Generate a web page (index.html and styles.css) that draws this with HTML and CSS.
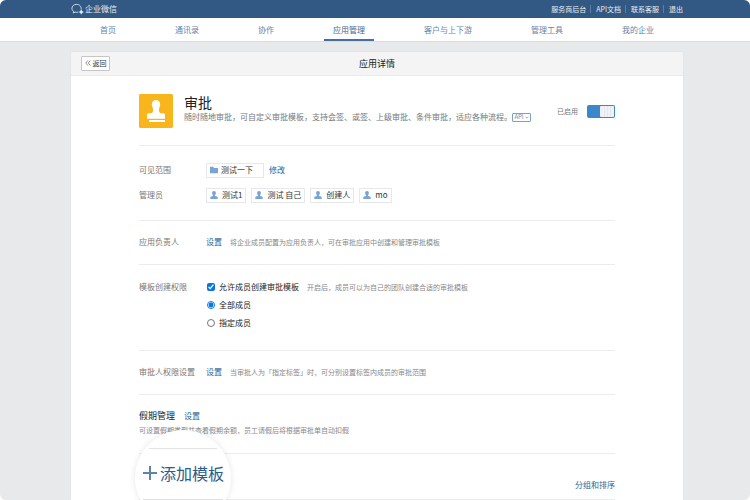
FILE: index.html
```html
<!DOCTYPE html>
<html lang="zh-CN">
<head>
<meta charset="utf-8">
<title>应用详情 - 企业微信</title>
<link rel="stylesheet" href="styles.css">
</head>
<body>
<svg class="sprite" width="0" height="0" aria-hidden="true">
  <symbol id="person" viewBox="0 0 8 8"><path d="M4 0c1.300 0 1.900.9 1.900 2 0 .9-.4 1.600-.8 2v1l2 .6c.4.200.6.500.6.900V8H.3V6.500c0-.4.2-.7.6-.9l2-.6V4c-.4-.4-.8-1.100-.8-2C2.100.900 2.700 0 4 0z"/></symbol>
</svg>
<div class="page">
  <header class="topbar">
    <a class="brand" href="#">
      <svg class="brand-logo" viewBox="0 0 14 12" aria-hidden="true">
        <path d="M10.800 6.300C11.400 3.400 9.200 1 5.900 1 3.200 1 1 2.900 1 5.300c0 1.400.7 2.500 1.800 3.300l-.3 1.700 1.900-1c1.200.4 2.400.4 3.500 0"/>
        <path class="dots" d="M11 6.300l1.100 1.800 1.700 1.100-1.700 1-1.100 1.700-1-1.700-1.700-1 1.700-1.100z"/>
      </svg>
      <span>企业微信</span>
    </a>
    <div class="toplinks">
      <a href="#">服务商后台</a><a href="#">API文档</a><a href="#">联系客服</a><a href="#">退出</a>
    </div>
  </header>
  <nav class="nav">
    <a href="#">首页</a>
    <a href="#">通讯录</a>
    <a href="#">协作</a>
    <a class="active" href="#">应用管理</a>
    <a href="#">客户与上下游</a>
    <a href="#">管理工具</a>
    <a href="#">我的企业</a>
  </nav>
  <main class="card">
    <div class="card-head">
      <button class="back" type="button"><svg viewBox="0 0 6 6" aria-hidden="true"><path d="M2.800.5L.8 3l2 2.500M5.300.5l-2 2.500 2 2.500"/></svg>返回</button>
      <h1>应用详情</h1>
    </div>
    <div class="content">
      <section class="app">
        <svg class="app-icon" viewBox="0 0 34 34" aria-hidden="true">
          <rect width="34" height="34" rx="1.500" fill="#f8b51c"/>
          <path fill="#fff" d="M17 6c2.500 0 4.200 1.800 4.200 4.100 0 1.700-.6 2.700-1 4-.4 1.600-.4 3.500.4 4.500.3.500.8.600 1.400.6h2.500c.9 0 1.500.6 1.500 1.500V24.700H8v-4c0-.9.600-1.500 1.500-1.500H12c.6 0 1.100-.1 1.400-.6.8-1 .8-2.900.4-4.500-.4-1.300-1-2.300-1-4C12.800 7.800 14.500 6 17 6zM10 26h16v2H10z"/>
        </svg>
        <div class="app-text">
          <h2>审批</h2>
          <p>随时随地审批，可自定义审批模板，支持会签、或签、上级审批、条件审批，适应各种流程。<button class="api" type="button">API<svg viewBox="0 0 4 3" aria-hidden="true"><path d="M.5.700L2 2.200 3.500.7"/></svg></button></p>
        </div>
        <label class="status">已启用<input class="switch" type="checkbox" role="switch" checked></label>
      </section>
      <section class="scope">
        <div class="row">
          <span class="label">可见范围</span>
          <span class="tag folder"><svg viewBox="0 0 8 8" aria-hidden="true"><path d="M0 .8h3.200l.8 1.100h4v5.300H0z"/></svg>测试一下</span>
          <a class="edit" href="#">修改</a>
        </div>
        <div class="row">
          <span class="label">管理员</span>
          <div class="tags">
            <span class="tag"><svg><use href="#person"/></svg>测试1</span>
            <span class="tag"><svg><use href="#person"/></svg>测试 自己</span>
            <span class="tag"><svg><use href="#person"/></svg>创建人</span>
            <span class="tag"><svg><use href="#person"/></svg>mo</span>
          </div>
        </div>
      </section>
      <section class="single">
        <div class="row">
          <span class="label">应用负责人</span>
          <a href="#">设置</a>
          <span class="hint">将企业成员配置为应用负责人，可在审批应用中创建和管理审批模板</span>
        </div>
      </section>
      <section class="permission">
        <div class="row top">
          <span class="label">模板创建权限</span>
          <div class="options">
            <div class="row">
              <label class="option"><input type="checkbox" checked>允许成员创建审批模板</label>
              <span class="hint">开启后，成员可以为自己的团队创建合适的审批模板</span>
            </div>
            <label class="option"><input type="radio" name="members" checked>全部成员</label>
            <label class="option"><input type="radio" name="members">指定成员</label>
          </div>
        </div>
      </section>
      <section class="single">
        <div class="row">
          <span class="label">审批人权限设置</span>
          <a href="#">设置</a>
          <span class="hint">当审批人为「指定标签」时，可分别设置标签内成员的审批范围</span>
        </div>
      </section>
      <section class="holiday">
        <div class="row"><h3>假期管理</h3><a href="#">设置</a></div>
        <p>可设置假期类型并查看假期余额，员工请假后将根据审批单自动扣假</p>
      </section>
      <section class="templates">
        <a href="#">分组和排序</a>
        <div class="lens">
          <button class="add" type="button"><svg viewBox="0 0 14 14" aria-hidden="true"><path d="M7 0v14M0 7h14"/></svg>添加模板</button>
        </div>
      </section>
    </div>
  </main>
</div>
</body>
</html>
```
FILE: styles.css
```css
* { box-sizing: border-box; }
html { background: #fff; }
body {
  margin: 0;
  font: 8px/12px "Noto Sans CJK SC", sans-serif;
  color: #333;
}
a { color: #2b6392; text-decoration: none; }
h1, h2, h3, p { margin: 0; font-weight: 400; }
button { font: inherit; padding: 0; cursor: pointer; }
svg { display: block; flex: none; }
.sprite { position: absolute; }

.page {
  min-height: 100vh;
  display: flex;
  flex-direction: column;
  overflow: hidden;
  border-radius: 6px;
  background: #e7e9eb;
}

.topbar {
  height: 18px;
  flex: none;
  padding: 0 67px 0 71px;
  display: flex;
  align-items: center;
  justify-content: space-between;
  background: #315983;
}
.topbar a { color: #e8eef5; }
.brand { display: flex; align-items: center; gap: 1px; }
.brand-logo { width: 13px; height: 12px; fill: none; stroke: #dce6f0; }
.brand-logo .dots { fill: #dce6f0; stroke: none; }
.toplinks { display: flex; font-size: 7px; }
.toplinks a { line-height: 8px; }
.toplinks a + a { margin-left: 4px; padding-left: 5px; border-left: 1px solid #5e7fa3; }

.nav {
  height: 24px;
  flex: none;
  padding: 0 91px;
  display: flex;
  gap: 41px;
  background: #fff;
  border-bottom: 1px solid #d9dbdd;
}
.nav a {
  padding: 0 9px;
  line-height: 23px;
  color: #6484a8;
  white-space: nowrap;
}
.nav .active { color: #42688f; border-bottom: 2px solid #466f9f; }

.card {
  flex: 1;
  margin: 10px 67px 0 71px;
  background: #fff;
  border-radius: 2px 2px 0 0;
  box-shadow: 0 0 1px #c4c7ca;
}
.card-head {
  height: 24px;
  padding: 0 10px;
  display: grid;
  grid-template-columns: 1fr auto 1fr;
  align-items: center;
  background: #f4f4f4;
  border-bottom: 1px solid #e9eaeb;
  border-radius: 2px 2px 0 0;
}
.card-head h1 { font-size: 9px; color: #222; }
.back {
  justify-self: start;
  width: 29px;
  height: 15px;
  display: flex;
  align-items: center;
  justify-content: center;
  gap: 2px;
  padding-bottom: 1px;
  font-size: 7px;
  color: #333;
  background: #fff;
  border: 1px solid #c4c6c8;
  border-radius: 1px;
}
.back svg { width: 6px; height: 6px; fill: none; stroke: #777; stroke-width: .8; }

.content { padding: 0 68px; }
section { border-bottom: 1px solid #ebecee; }
.row { display: flex; align-items: center; }
.row.top { align-items: flex-start; }
.label { width: 67px; flex: none; color: #777; }
.hint { margin-left: 8px; font-size: 7px; color: #888; white-space: nowrap; }

.app { height: 70px; padding-top: 18px; display: flex; align-items: flex-start; }
.app-icon { width: 34px; height: 34px; }
.app-text { flex: 1; margin-left: 11px; white-space: nowrap; }
.app-text h2 { font-size: 14px; line-height: 17px; color: #222; }
.app-text p { display: flex; align-items: center; color: #777; }
.api {
  width: 19px;
  height: 9px;
  display: flex;
  align-items: center;
  justify-content: center;
  gap: 1px;
  font-size: 6px;
  line-height: 6px;
  color: #6b8fbd;
  background: #fff;
  border: 1px solid #7f9fc9;
  border-radius: 1px;
}
.api svg { width: 4px; height: 3px; fill: none; stroke: #6b8fbd; stroke-width: .7; }
.status {
  height: 34px;
  display: flex;
  align-items: center;
  gap: 9px;
  font-size: 7px;
  color: #777;
  white-space: nowrap;
}
.switch {
  appearance: none;
  width: 28px;
  height: 13px;
  margin: 0;
  padding: 1px;
  display: flex;
  justify-content: flex-end;
  background: #3b87ca;
  border-radius: 2px;
}
.switch::before {
  content: "";
  width: 14px;
  height: 11px;
  border-radius: 1px;
  background: linear-gradient(90deg, #f0f1f6 4px, #e6e8ef 4px 5px, #f0f1f6 5px 7px, #e6e8ef 7px 8px, #f0f1f6 8px 10px, #e6e8ef 10px 11px, #f0f1f6 11px);
}

.scope { height: 75px; padding-top: 17px; display: flex; flex-direction: column; gap: 10px; }
.scope .label, .scope .edit { padding-bottom: 1px; }
.tags { display: flex; gap: 5px; }
.tag {
  height: 15px;
  padding: 0 3px 1px;
  display: flex;
  align-items: center;
  gap: 4px;
  color: #333;
  border: 1px solid #e6e8eb;
  white-space: nowrap;
}
.tag svg { width: 8px; height: 8px; fill: #7ba4d4; }
.folder { width: 58px; gap: 3px; }
.edit { margin-left: 5px; }

.single { height: 44px; padding-top: 15px; }

.permission { height: 86px; padding-top: 16px; }
.options { display: flex; flex-direction: column; gap: 6px; }
.option { display: flex; align-items: center; color: #222; white-space: nowrap; }
.option input { width: 8px; height: 8px; margin: 0 4px 0 1px; accent-color: #0b75e8; }

.holiday { height: 59px; padding-top: 14px; }
.holiday .row { gap: 9px; }
.holiday h3 { font-size: 9px; line-height: 14px; color: #222; }
.holiday p { margin-top: 1px; font-size: 7px; color: #888; }

.templates {
  position: relative;
  height: 46px;
  padding-top: 25px;
  display: flex;
  justify-content: flex-end;
  align-items: flex-start;
}
.lens {
  position: absolute;
  left: -4px;
  top: -24px;
  width: 96px;
  height: 96px;
  padding: 18px 8px 26px;
  display: flex;
  flex-direction: column;
  border-radius: 50%;
  overflow: hidden;
  background: #fff;
  box-shadow: 0 0 6px rgba(0, 0, 0, .1);
}
.lens::before { content: ""; height: 1px; margin: 0 6px; background: #e2e3e5; }
.add {
  height: 51px;
  padding-bottom: 2px;
  display: flex;
  align-items: center;
  gap: 3px;
  font-size: 16px;
  color: #2a5c8c;
  background: none;
  border: 0;
  border-bottom: 1px solid #dcdee0;
  white-space: nowrap;
}
.add svg { width: 14px; height: 14px; fill: none; stroke: #6083ad; stroke-width: 2; }
```
